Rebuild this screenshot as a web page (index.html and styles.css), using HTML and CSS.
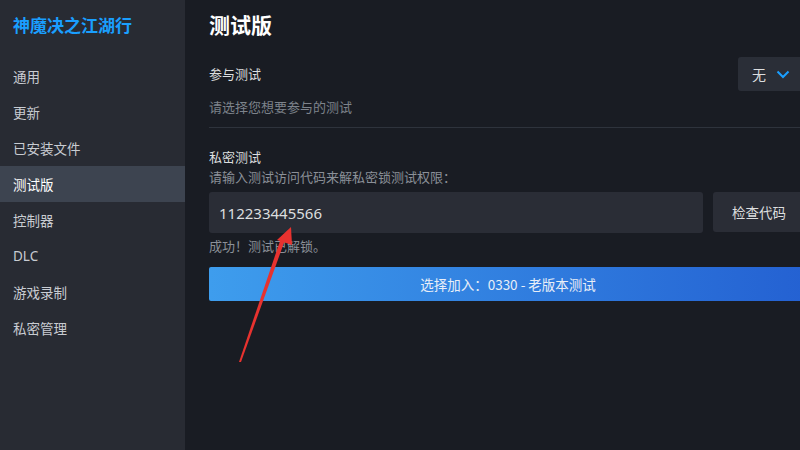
FILE: index.html
```html
<!DOCTYPE html>
<html lang="zh">
<head>
<meta charset="utf-8">
<link rel="stylesheet" href="styles.css">
</head>
<body>
<div class="app">
  <aside class="sidebar">
    <div class="game-title">神魔决之江湖行</div>
    <nav class="nav">
      <div class="nav-item">通用</div>
      <div class="nav-item">更新</div>
      <div class="nav-item">已安装文件</div>
      <div class="nav-item active">测试版</div>
      <div class="nav-item">控制器</div>
      <div class="nav-item latin">DLC</div>
      <div class="nav-item">游戏录制</div>
      <div class="nav-item">私密管理</div>
    </nav>
  </aside>
  <main class="main">
    <h1 class="page-title">测试版</h1>
    <section class="section join">
      <div class="row-head">
        <div class="label">参与测试</div>
        <div class="dropdown">
          <span>无</span>
          <svg class="chev" width="14" height="9" viewBox="0 0 14 9"><path d="M1.5 1.5 L7 7 L12.5 1.5" fill="none" stroke="#1a9fff" stroke-width="2"/></svg>
        </div>
      </div>
      <div class="desc">请选择您想要参与的测试</div>
    </section>
    <section class="section private">
      <div class="label">私密测试</div>
      <div class="desc tight">请输入测试访问代码来解私密锁测试权限：</div>
      <div class="code-row">
        <div class="code-input">112233445566</div>
        <div class="check-btn">检查代码</div>
      </div>
      <div class="desc success">成功！测试已解锁。</div>
      <div class="join-btn">选择加入：0330 - 老版本测试</div>
    </section>
  </main>
</div>
<svg class="arrow" width="800" height="450" viewBox="0 0 800 450">
  <polygon points="239,362 241,362 285,240 281,238" fill="#e8322f"/>
  <polygon points="291,227 277,240 292,245" fill="#e8322f"/>
</svg>
</body>
</html>
```
FILE: styles.css
```css
html, body {
  margin: 0;
  padding: 0;
  width: 800px;
  height: 450px;
  overflow: hidden;
  background: #191c23;
  font-family: "Noto Sans CJK SC", "Noto Sans", sans-serif;
}
.app {
  display: flex;
  height: 450px;
}
.sidebar {
  width: 185px;
  flex: none;
  background: #282b33;
}
.game-title {
  height: 58px;
  box-sizing: border-box;
  padding: 13px 0 0 13px;
  color: #1a9fff;
  font-size: 17px;
  font-weight: 700;
  line-height: 24px;
}
.nav-item {
  height: 36px;
  line-height: 36px;
  padding-left: 13px;
  color: #c8ccd2;
  font-size: 13.5px;
}
.nav-item.latin {
  font-family: "Noto Sans", sans-serif;
}
.nav-item.active {
  background: #3d4450;
  color: #ffffff;
}
.main {
  flex: none;
  width: 598px;
  padding-left: 24px;
}
.page-title {
  margin: 0;
  padding-top: 10px;
  height: 57px;
  box-sizing: border-box;
  font-size: 21px;
  line-height: 28px;
  font-weight: 700;
  color: #ffffff;
}
.section.join {
  border-bottom: 1px solid #2e333c;
  padding-bottom: 10px;
}
.row-head {
  display: flex;
  justify-content: space-between;
  align-items: center;
  height: 34px;
}
.label {
  color: #dcdedf;
  font-size: 13px;
  line-height: 20px;
}
.dropdown {
  width: 69px;
  height: 34px;
  box-sizing: border-box;
  background: #2a2e37;
  border-radius: 3px;
  display: flex;
  align-items: center;
  gap: 10px;
  padding-left: 14px;
  color: #dcdedf;
  font-size: 14px;
}
.chev {
  margin-top: 1px;
}
.desc {
  color: #7d838b;
  font-size: 13px;
  line-height: 20px;
  margin-top: 6px;
}
.desc.tight {
  margin-top: 0;
  color: #8b9098;
}
.section.private {
  padding-top: 19px;
}
.code-row {
  display: flex;
  gap: 10px;
  margin-top: 5px;
}
.code-input {
  width: 494px;
  height: 41px;
  box-sizing: border-box;
  background: #2a2d36;
  border-radius: 3px;
  padding-left: 10px;
  line-height: 42px;
  color: #dcdedf;
  font-family: "Noto Sans", sans-serif;
  font-size: 15px;
}
.check-btn {
  flex: 1;
  height: 40px;
  background: #2a2d36;
  border-radius: 3px;
  padding-left: 19px;
  line-height: 40px;
  color: #dcdedf;
  font-size: 13.5px;
}
.desc.success {
  margin-top: 3px;
  color: #8b9098;
}
.join-btn {
  margin-top: 11px;
  height: 34px;
  line-height: 34px;
  border-radius: 2px;
  background: linear-gradient(to right, #3e9ded, #2461d2);
  color: #e8eef7;
  font-size: 13.5px;
  text-align: center;
}
.arrow {
  position: absolute;
  left: 0;
  top: 0;
  pointer-events: none;
}
```
